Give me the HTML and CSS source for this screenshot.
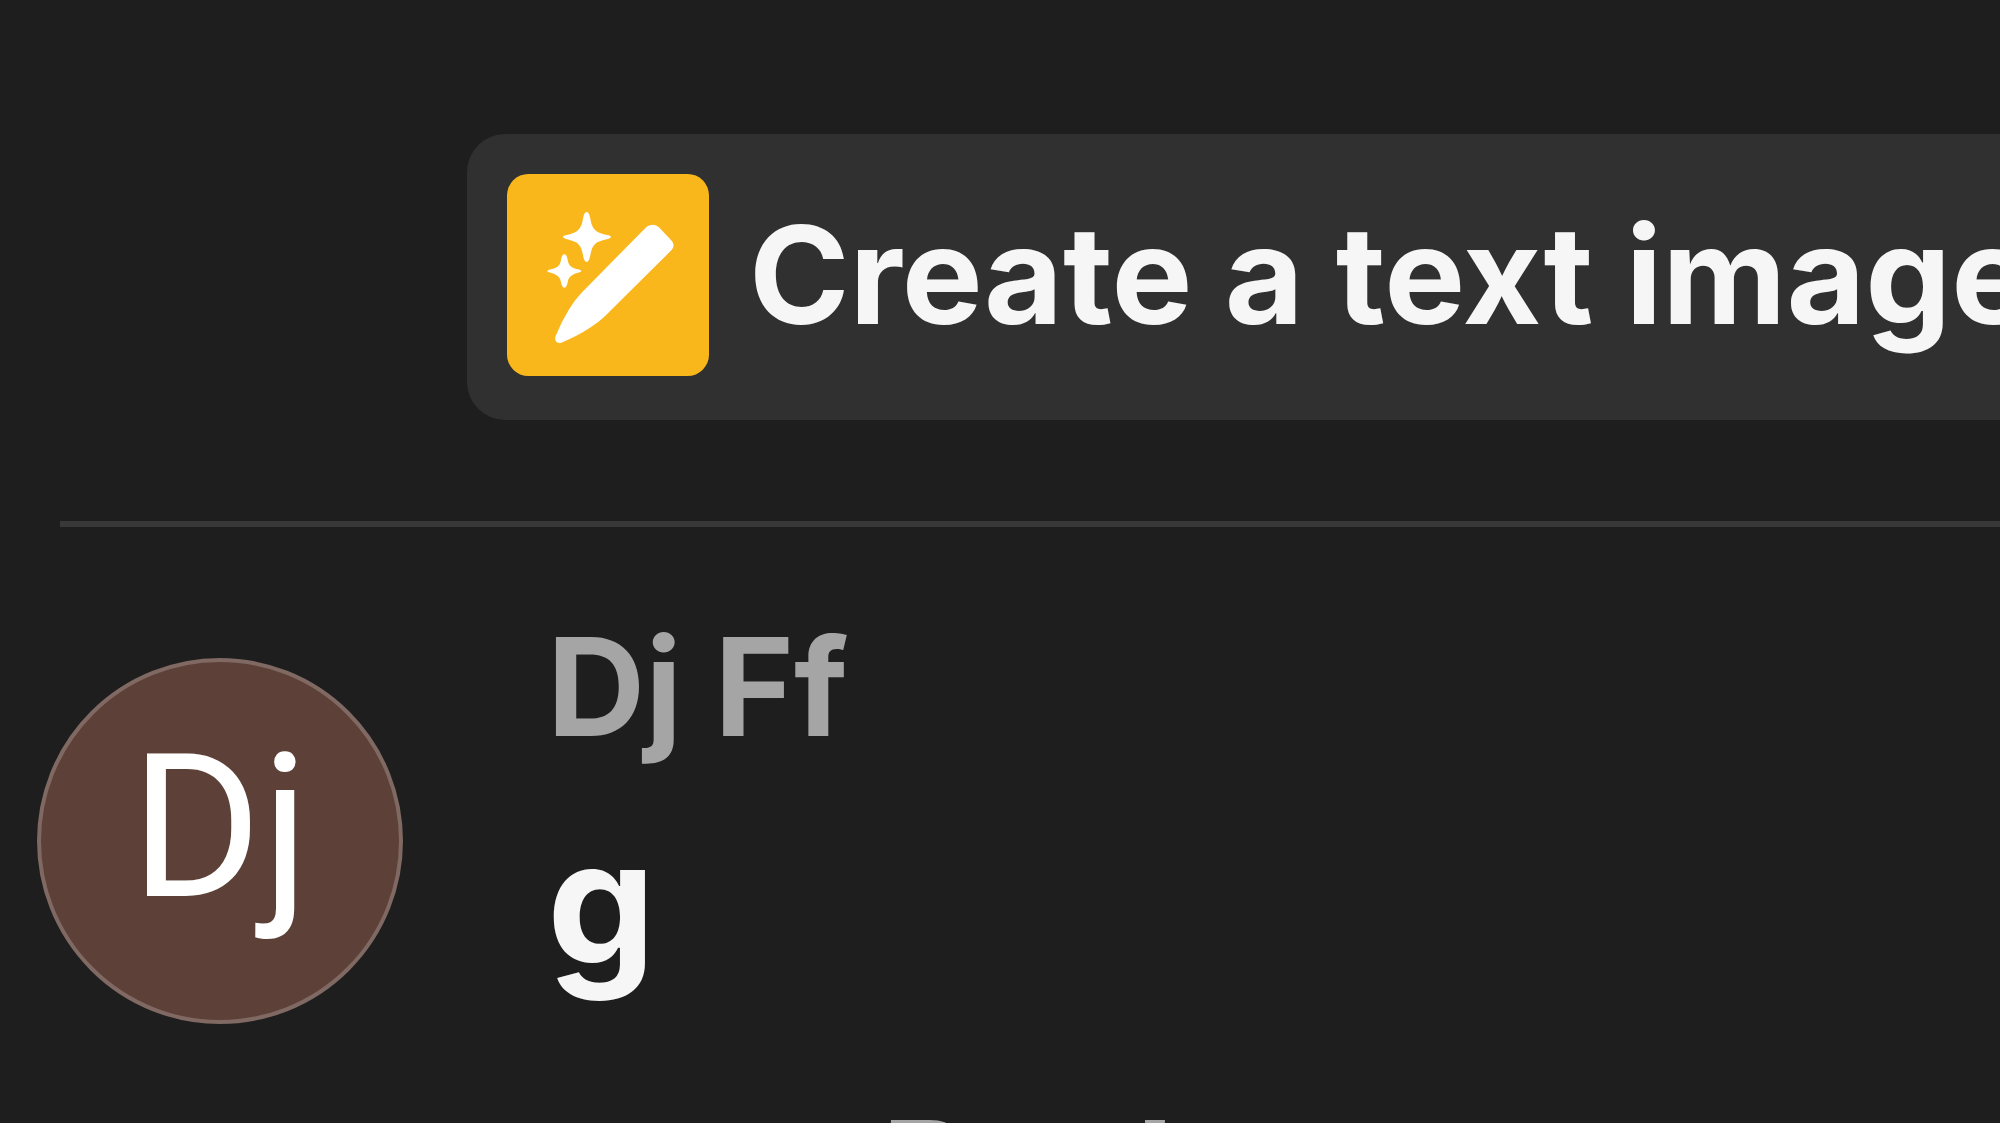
FILE: index.html
```html
<!DOCTYPE html>
<html lang="en">
<head>
    <meta charset="UTF-8">
    <meta name="viewport" content="width=device-width, initial-scale=1.0">
    <title>Comments</title>
    <link rel="stylesheet" href="styles.css">
</head>
<body>
    <div class="toolbar">
        <button class="btn-create" type="button">
            <svg class="create-icon" viewBox="171 162 606 606" aria-hidden="true">
                <rect x="171" y="162" width="606" height="606" rx="64" fill="#fab71c"/>
                <g fill="#fff">
                    <!-- stars -->
                    <path d="M410 276C416 276 419 286 421 296C424 314 430 328 442 335C452 341 464 343 476 346Q490 351 476 356C464 359 452 361 442 367C430 374 424 388 421 406C419 416 416 426 410 426C404 426 401 416 399 406C396 388 390 374 378 367C368 361 356 359 346 356Q332 351 346 346C356 343 368 341 378 335C390 328 396 314 399 296C401 286 404 276 410 276Z"/>
                    <path d="M343 403C349 403 351 411 353 420C355 433 360 439 369 443C376 446 382 447 389 449Q399 453 389 457C382 459 376 460 369 464C360 468 355 474 353 487C351 496 349 503 343 503C337 503 335 496 333 487C331 474 326 468 317 464C310 460 304 459 297 457Q287 453 297 449C304 447 310 446 317 443C326 439 331 433 333 420C335 411 337 403 343 403Z"/>
                    <!-- pen -->
                    <path d="M590 320Q609 308 626 321L665 362Q677 376 664 391L463 590Q444 608 422 622Q380 650 334 668Q325 671 319 665Q313 658 317 648Q334 605 356 570Q373 541 394 519Z"/>
                </g>
            </svg>
            <span class="create-label">Create a text image</span>
        </button>
    </div>

    <hr class="divider">

    <article class="comment">
        <div class="avatar">Dj</div>
        <div class="comment-body">
            <h2 class="comment-author">Dj Ff</h2>
            <p class="comment-text">g</p>
            <button class="btn-reply" type="button">Reply</button>
        </div>
    </article>
</body>
</html>
```
FILE: styles.css
```css
* {
    box-sizing: border-box;
}

body {
    margin: 0;
    height: 100vh;
    overflow: hidden;
    background-color: #1e1e1e;
    color: #f6f6f6;
    font-family: Inter, sans-serif;
}

button {
    border: none;
    font-family: inherit;
    cursor: pointer;
}

.toolbar {
    padding: 134px 0 0 467px;
}

.btn-create {
    display: flex;
    align-items: center;
    gap: 40px;
    width: 100%;
    padding: 40px 0 44px 40px;
    border-radius: 38px 0 0 38px;
    background-color: #303030;
    color: #f6f6f6;
    overflow: hidden;
}

.create-icon {
    flex: none;
    width: 202px;
    height: 202px;
}

.create-label {
    font-size: 136px;
    font-weight: 700;
    line-height: 136px;
    white-space: nowrap;
}

.divider {
    height: 6px;
    margin: 101px 0 0 60px;
    border: none;
    background-color: #383838;
}

.comment {
    display: flex;
    gap: 144px;
    padding: 92px 0 0 37px;
}

.avatar {
    display: flex;
    flex: none;
    align-items: center;
    justify-content: center;
    width: 366px;
    height: 366px;
    margin-top: 39px;
    padding-bottom: 26px;
    border: 4px solid #7f6962;
    border-radius: 50%;
    background-color: #5d4138;
    color: #fff;
    font-family: Roboto, sans-serif;
    font-size: 200px;
    line-height: 200px;
}

.comment-author {
    margin: 0 0 60px;
    color: #a5a5a5;
    font-size: 136px;
    font-weight: 700;
    line-height: 136px;
}

.comment-text {
    margin: 0;
    font-size: 172px;
    font-weight: 700;
    line-height: 172px;
}

.btn-reply {
    display: block;
    margin: 115px 0 0 335px;
    padding: 0;
    background: none;
    color: #a5a5a5;
    font-size: 136px;
    font-weight: 700;
    line-height: 136px;
}
```
